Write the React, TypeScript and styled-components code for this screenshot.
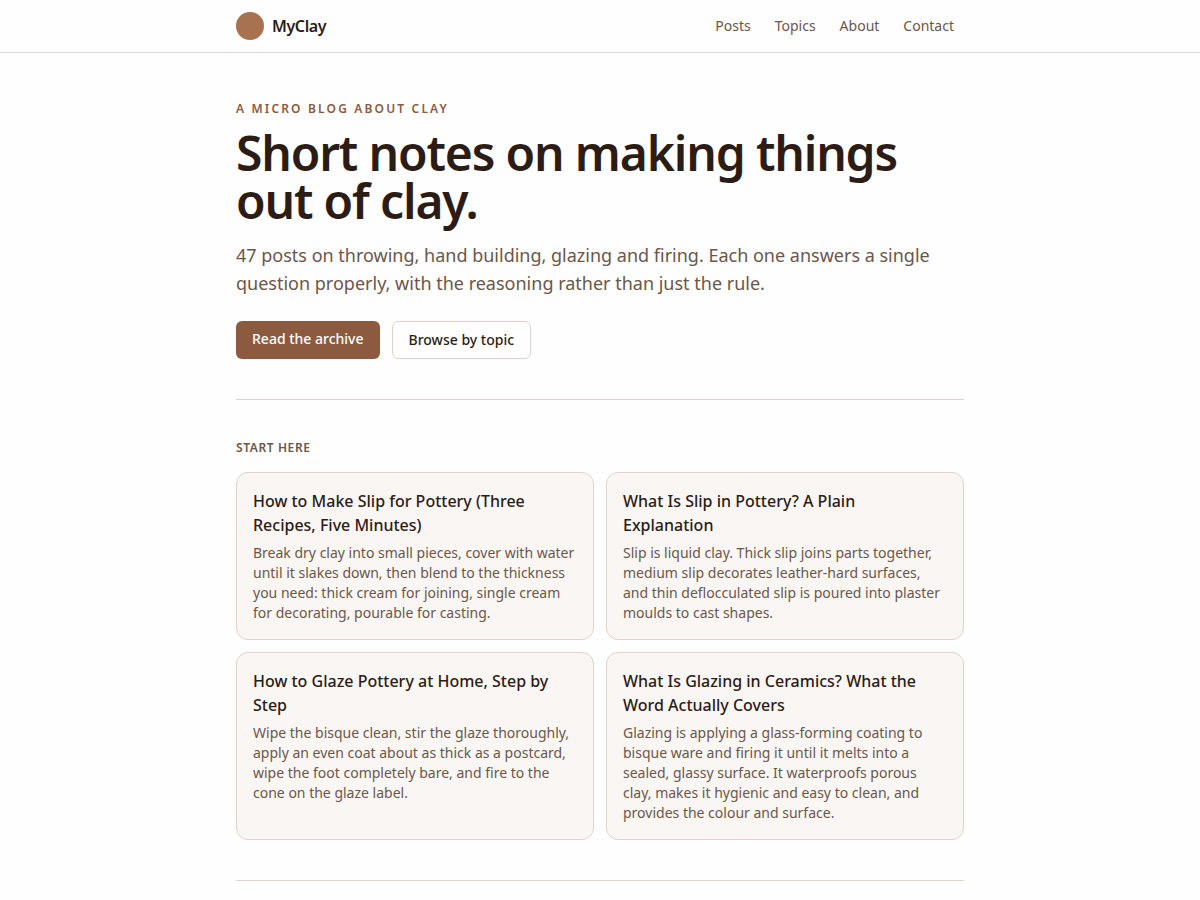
import React from "react";
import styled, { createGlobalStyle } from "styled-components";

const GlobalStyle = createGlobalStyle`
  *, *::before, *::after { box-sizing: border-box; }
  body {
    margin: 0;
    background: #fefefe;
    color: #2c1c16;
    font-family: "Noto Sans", sans-serif;
    font-size: 16px;
    line-height: 24px;
  }
  h1, h2, h3, p { margin: 0; }
  a { color: inherit; text-decoration: none; }
`;

const Header = styled.header`
  border-bottom: 1px solid #ddd5cb;
`;

const Container = styled.div`
  max-width: 768px;
  margin: 0 auto;
  padding: 0 20px;
`;

const HeaderRow = styled(Container)`
  display: flex;
  align-items: center;
  justify-content: space-between;
  padding-top: 8px;
  padding-bottom: 8px;
  min-height: 52px;
`;

const Brand = styled.a`
  display: flex;
  align-items: center;
  gap: 8px;
  font-weight: 600;
  letter-spacing: -0.025em;
`;

const BrandMark = styled.span`
  width: 28px;
  height: 28px;
  border-radius: 50%;
  background: #a8714f;
`;

const Nav = styled.nav`
  display: flex;
  gap: 4px;
`;

const NavLink = styled.a`
  padding: 6px 10px;
  font-size: 14px;
  line-height: 20px;
  color: #6b564b;
`;

const Hero = styled.section`
  padding: 48px 0 40px;
  border-bottom: 1px solid #e0d2c8;
`;

const Eyebrow = styled.p`
  font-size: 12px;
  line-height: 16px;
  font-weight: 600;
  letter-spacing: 0.18em;
  text-transform: uppercase;
  color: #8c5a3f;
`;

const Title = styled.h1`
  margin-top: 12px;
  font-size: 48px;
  line-height: 48px;
  font-weight: 600;
  letter-spacing: -0.024em;
`;

const Lead = styled.p`
  margin-top: 16px;
  font-size: 18px;
  line-height: 28px;
  color: #6b564b;
`;

const Actions = styled.div`
  display: flex;
  flex-wrap: wrap;
  gap: 12px;
  margin-top: 24px;
`;

const PrimaryButton = styled.a`
  padding: 8px 16px;
  border-radius: 6px;
  background: #8c5a3f;
  color: #ffffff;
  font-size: 14px;
  line-height: 20px;
  font-weight: 500;
`;

const OutlineButton = styled(PrimaryButton)`
  border: 1px solid #e0d2c8;
  background: transparent;
  color: #2c1c16;
`;

const Section = styled.section`
  padding: 40px 0;
  border-bottom: 1px solid #ddd5cb;
`;

const SectionTitle = styled.h2`
  font-size: 12px;
  line-height: 16px;
  font-weight: 600;
  letter-spacing: 0.05em;
  text-transform: uppercase;
  color: #6b564b;
`;

const CardGrid = styled.div`
  display: grid;
  grid-template-columns: repeat(2, minmax(0, 1fr));
  gap: 12px;
  margin-top: 16px;

  @media (max-width: 640px) {
    grid-template-columns: 1fr;
  }
`;

const Card = styled.a`
  padding: 16px;
  border: 1px solid #e2d2c8;
  border-radius: 12px;
  background: #faf6f4;
`;

const CardTitle = styled.h3`
  font-size: 16px;
  line-height: 24px;
  font-weight: 500;
`;

const CardText = styled.p`
  margin-top: 6px;
  font-size: 14px;
  line-height: 20px;
  color: #6b564b;
`;

const links = ["Posts", "Topics", "About", "Contact"];

const posts = [
  {
    slug: "how-to-make-slip",
    title: "How to Make Slip for Pottery (Three Recipes, Five Minutes)",
    text: "Break dry clay into small pieces, cover with water until it slakes down, then blend to the thickness you need: thick cream for joining, single cream for decorating, pourable for casting.",
  },
  {
    slug: "what-is-slip",
    title: "What Is Slip in Pottery? A Plain Explanation",
    text: "Slip is liquid clay. Thick slip joins parts together, medium slip decorates leather-hard surfaces, and thin deflocculated slip is poured into plaster moulds to cast shapes.",
  },
  {
    slug: "how-to-glaze",
    title: "How to Glaze Pottery at Home, Step by Step",
    text: "Wipe the bisque clean, stir the glaze thoroughly, apply an even coat about as thick as a postcard, wipe the foot completely bare, and fire to the cone on the glaze label.",
  },
  {
    slug: "what-is-glazing",
    title: "What Is Glazing in Ceramics? What the Word Actually Covers",
    text: "Glazing is applying a glass-forming coating to bisque ware and firing it until it melts into a sealed, glassy surface. It waterproofs porous clay, makes it hygienic and easy to clean, and provides the colour and surface.",
  },
];

export default function App() {
  return (
    <>
      <GlobalStyle />
      <Header>
        <HeaderRow>
          <Brand href="#home">
            <BrandMark />
            MyClay
          </Brand>
          <Nav>
            {links.map((name) => (
              <NavLink key={name} href={`#${name.toLowerCase()}`}>
                {name}
              </NavLink>
            ))}
          </Nav>
        </HeaderRow>
      </Header>
      <Container as="main">
        <Hero>
          <Eyebrow>A micro blog about clay</Eyebrow>
          <Title>Short notes on making things out of clay.</Title>
          <Lead>
            47 posts on throwing, hand building, glazing and firing. Each one
            answers a single question properly, with the reasoning rather than
            just the rule.
          </Lead>
          <Actions>
            <PrimaryButton href="#posts">Read the archive</PrimaryButton>
            <OutlineButton href="#topics">Browse by topic</OutlineButton>
          </Actions>
        </Hero>
        <Section>
          <SectionTitle>Start here</SectionTitle>
          <CardGrid>
            {posts.map((post) => (
              <Card key={post.slug} href={`#${post.slug}`}>
                <CardTitle>{post.title}</CardTitle>
                <CardText>{post.text}</CardText>
              </Card>
            ))}
          </CardGrid>
        </Section>
      </Container>
    </>
  );
}
